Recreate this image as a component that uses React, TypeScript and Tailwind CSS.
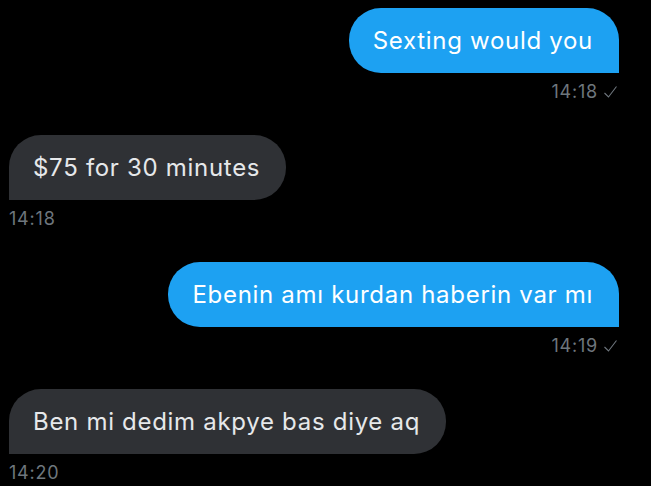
import React from "react";

const messages = [
  { id: 1, text: "Sexting would you", time: "14:18", mine: true },
  { id: 2, text: "$75 for 30 minutes", time: "14:18", mine: false },
  { id: 3, text: "Ebenin amı kurdan haberin var mı", time: "14:19", mine: true },
  { id: 4, text: "Ben mi dedim akpye bas diye aq", time: "14:20", mine: false },
];

function Check() {
  return (
    <svg width="15" height="14" viewBox="0 0 15 14" className="ml-[5px]">
      <path d="M1.5 8 L5.5 12 L13.5 1.5" fill="none" stroke="#6e767d" strokeWidth="1.1" />
    </svg>
  );
}

export default function App() {
  return (
    <div
      className="w-[651px] h-[486px] bg-black overflow-hidden pt-[8px] pl-[9px] pr-[32px]"
      style={{ fontFamily: "Inter, 'Liberation Sans', sans-serif" }}
    >
      <div className="flex flex-col gap-[33px]">
        {messages.map((m) => (
          <div key={m.id} className={`flex flex-col ${m.mine ? "items-end" : "items-start"}`}>
            <div
              className={`h-[65px] flex items-center pl-[24px] pr-[26px] text-[24px] tracking-[0.7px] rounded-[32px] ${
                m.mine
                  ? "bg-[#1da1f2] text-white rounded-br-none"
                  : "bg-[#2f3135] text-[#e6e8ea] rounded-bl-none"
              }`}
            >
              {m.text}
            </div>
            <div
              className={`mt-[8px] h-[21px] flex items-center text-[18px] tracking-[0.8px] text-[#6e767d] ${
                m.mine ? "pr-[1px]" : ""
              }`}
            >
              {m.time}
              {m.mine && <Check />}
            </div>
          </div>
        ))}
      </div>
    </div>
  );
}
